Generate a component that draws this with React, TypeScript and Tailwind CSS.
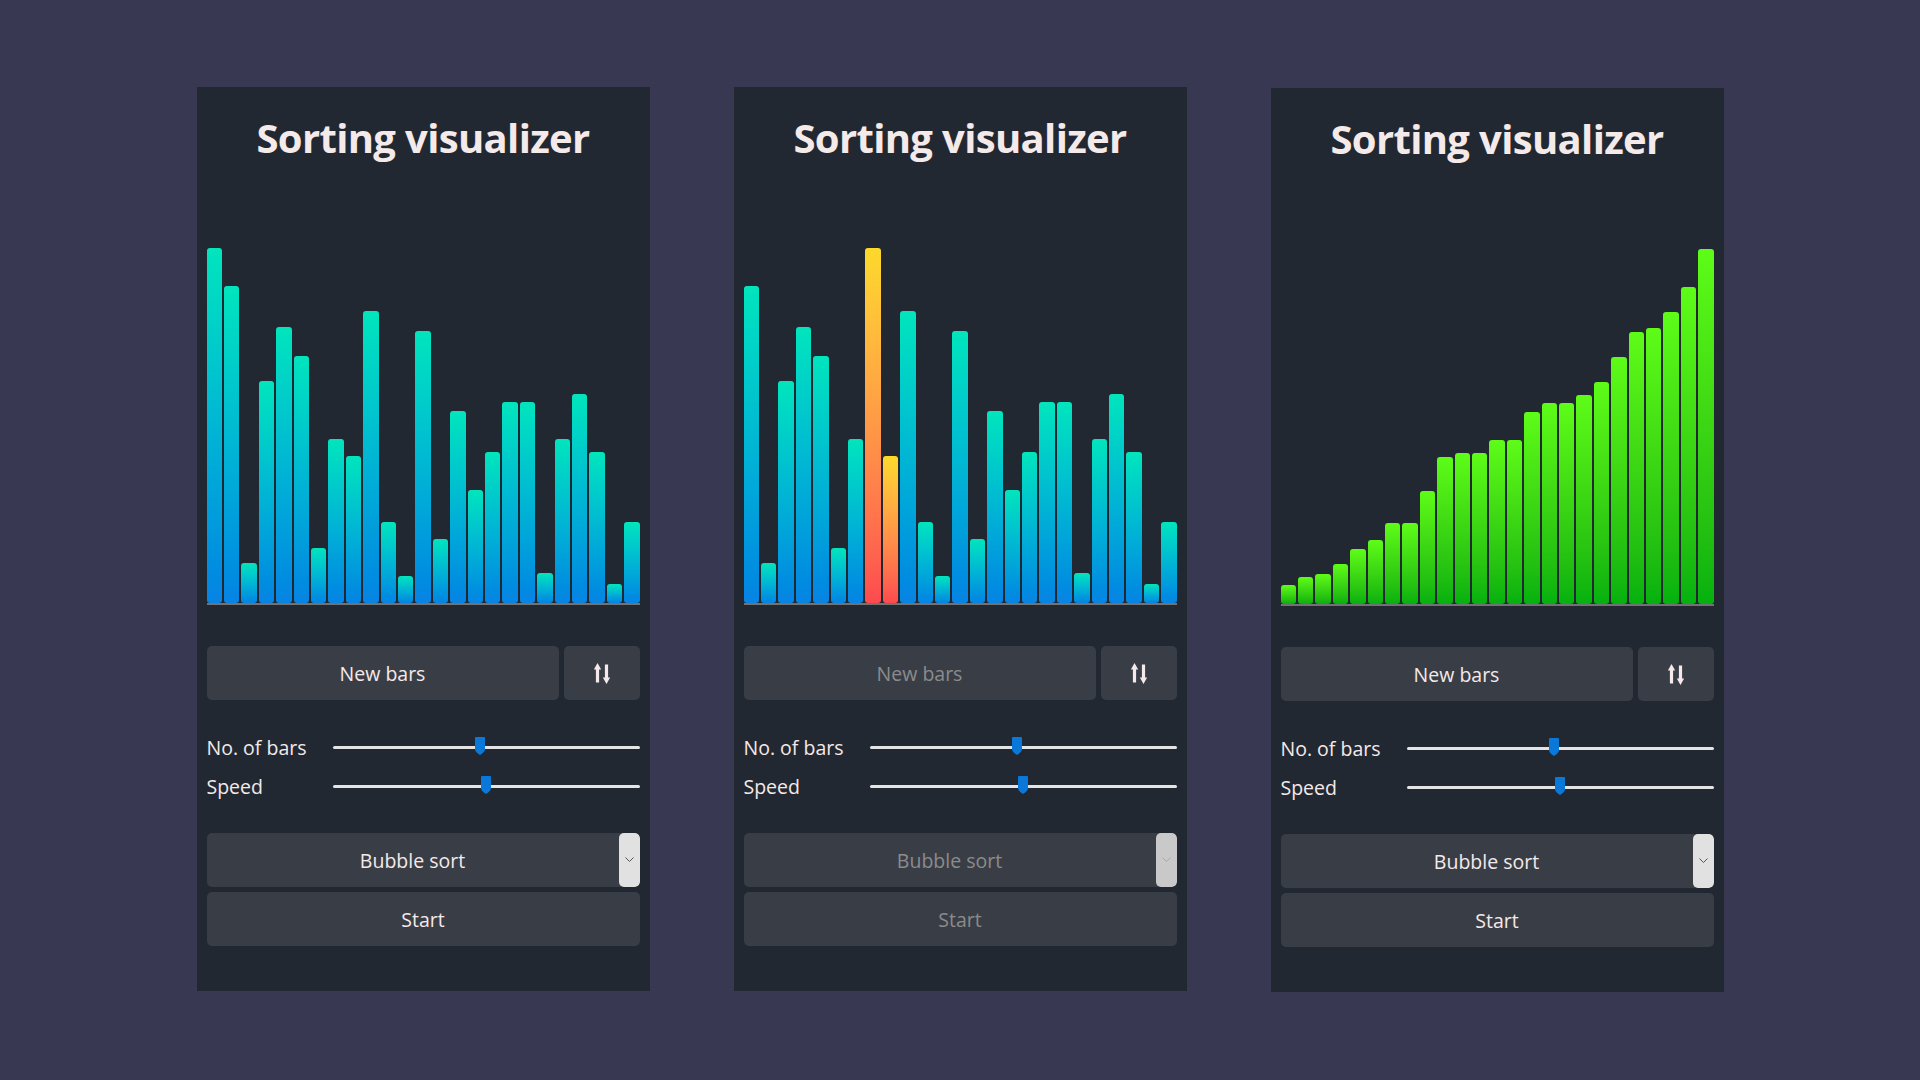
import React from 'react'

// heights in px of the 25 bars, as first drawn
const initialBars = [
  355, 317, 40, 222, 276, 247, 55, 164, 147, 292, 81, 27, 272, 64, 192, 113, 151, 201, 201, 30,
  164, 209, 151, 19, 81,
]

// one pass of bubble sort later: the big bar is moving to the right
const midBars = [
  317, 40, 222, 276, 247, 55, 164, 355, 147, 292, 81, 27, 272, 64, 192, 113, 151, 201, 201, 30,
  164, 209, 151, 19, 81,
]

const sortedBars = [...initialBars].sort((a, b) => a - b)

type BarColor = 'normal' | 'compare' | 'done'

const barClass: Record<BarColor, string> = {
  normal: 'bg-linear-to-b from-[#04e5bd] to-[#0983e3]',
  compare: 'bg-linear-to-b from-[#fcd92b] to-[#fc4a4f]',
  done: 'bg-linear-to-b from-[#5efc18] to-[#03b10f]',
}

// chunky up/down arrows
function SwapIcon() {
  return (
    <svg width="16" height="21" viewBox="0 0 16 21" fill="currentColor">
      <path d="M3.5 0 L7.2 6.5 H5.1 V19.5 H1.9 V6.5 H-0.2 Z" />
      <path d="M12.5 21 L16.2 14.5 H14.1 V1.5 H10.9 V14.5 H8.8 Z" />
    </svg>
  )
}

function Slider({ label, value }: { label: string; value: number }) {
  return (
    <div className="flex h-[30px] items-center">
      <span className="w-[126px] shrink-0 pt-[2px] text-[19.5px] text-[#f5e9e9]">{label}</span>
      <div className="relative h-[3px] flex-1 rounded-full bg-[#e4e4e4]">
        <div
          className="absolute top-[-9px] h-[18px] w-[10px]"
          style={{ left: `calc(${value * 100}% - ${value * 10}px)` }}
        >
          <svg width="10" height="18" viewBox="0 0 10 18">
            <path d="M0 1 Q0 0 1 0 H9 Q10 0 10 1 V12 Q10 15 5 18 Q0 15 0 12 Z" fill="#0a78d9" />
          </svg>
        </div>
      </div>
    </div>
  )
}

function Panel({
  bars,
  colors,
  disabled = false,
  className = '',
}: {
  bars: number[]
  colors: BarColor[]
  disabled?: boolean
  className?: string
}) {
  const textColor = disabled ? 'text-[#8c8b8c]' : 'text-[#f5e9e9]'

  return (
    <div className={`flex h-[904px] w-[453px] flex-col bg-[#222831] px-[10px] ${className}`}>
      <h1 className="mt-[31px] text-center text-[40px] leading-none font-bold tracking-[-0.65px] text-[#f5eaea]">
        Sorting visualizer
      </h1>

      {/* bars */}
      <div className="mt-[89px] flex h-[356px] items-end gap-[2px]">
        {bars.map((h, i) => (
          <div
            key={i}
            className={`flex-1 rounded-[3px] ${barClass[colors[i]]}`}
            style={{ height: h }}
          />
        ))}
      </div>
      <div className="h-[2px] bg-[#727272]" />

      {/* buttons */}
      <div className="mt-[41px] flex h-[54px] gap-[5px]">
        <button className={`flex-1 rounded-[5px] bg-[#393e46] pt-[2px] text-[19.5px] ${textColor}`}>
          New bars
        </button>
        <button className="flex w-[76px] items-center justify-center rounded-[5px] bg-[#393e46] text-[#f5e9e9]">
          <SwapIcon />
        </button>
      </div>

      <div className="mt-[32px] flex flex-col gap-[9px]">
        <Slider label="No. of bars" value={0.48} />
        <Slider label="Speed" value={0.5} />
      </div>

      {/* algorithm select */}
      <div className="mt-[32px] flex h-[54px] overflow-hidden rounded-[5px] bg-[#393e46]">
        <div className={`flex flex-1 items-center justify-center pt-[2px] text-[19.5px] ${textColor}`}>
          Bubble sort
        </div>
        <div
          className={`flex w-[21px] items-center justify-center rounded-[5px] ${
            disabled ? 'bg-[#c9c9c9] text-[#a9a9a9]' : 'bg-[#e1e1e1] text-[#555555]'
          }`}
        >
          <svg width="9" height="6" viewBox="0 0 9 6" fill="none" stroke="currentColor" strokeWidth="1">
            <path d="M0.5 0.5 L4.5 4.5 L8.5 0.5" />
          </svg>
        </div>
      </div>
      <button className={`mt-[5px] h-[54px] rounded-[5px] bg-[#393e46] pt-[2px] text-[19.5px] ${textColor}`}>
        Start
      </button>
    </div>
  )
}

export default function App() {
  const midColors: BarColor[] = midBars.map((_, i) => (i === 7 || i === 8 ? 'compare' : 'normal'))

  return (
    <div className="flex min-h-screen w-full items-start justify-center gap-[84px] bg-[#393853] pt-[87px] font-['Open_Sans',sans-serif]">
      <Panel bars={initialBars} colors={initialBars.map(() => 'normal')} />
      <Panel bars={midBars} colors={midColors} disabled />
      <Panel bars={sortedBars} colors={sortedBars.map(() => 'done')} className="mt-[1px]" />
    </div>
  )
}
